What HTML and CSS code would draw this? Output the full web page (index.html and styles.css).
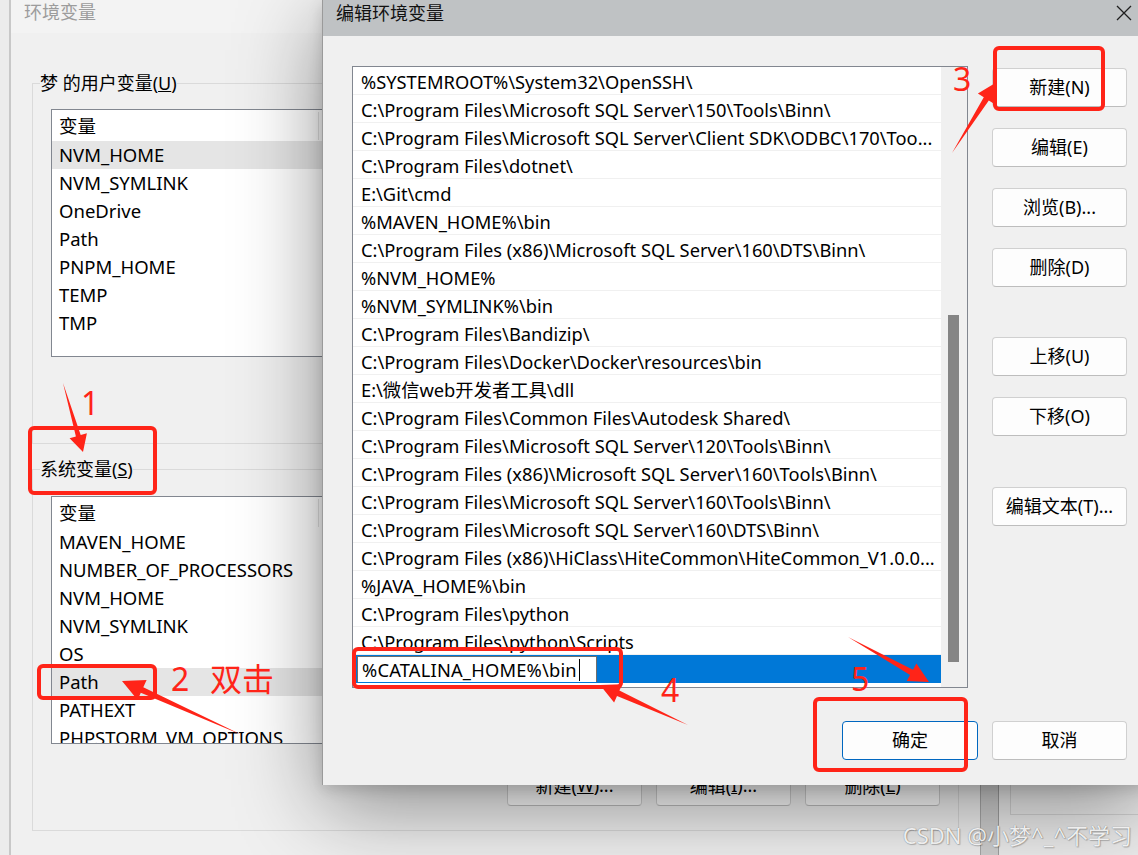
FILE: index.html
```html
<!DOCTYPE html>
<html lang="zh-CN">
<head>
<meta charset="utf-8">
<title>编辑环境变量</title>
<link rel="stylesheet" href="styles.css">
</head>
<body>
<div class="desk">
  <div class="envwin">
    <div class="env-title">环境变量</div>
    <fieldset class="grp grp-user">
      <legend>梦 的用户变量(<u>U</u>)</legend>
      <div class="vlist">
        <div class="vhead"><span>变量</span></div>
        <div class="vrow sel">NVM_HOME</div>
        <div class="vrow">NVM_SYMLINK</div>
        <div class="vrow">OneDrive</div>
        <div class="vrow">Path</div>
        <div class="vrow">PNPM_HOME</div>
        <div class="vrow">TEMP</div>
        <div class="vrow">TMP</div>
      </div>
      <div class="grp-btns">
        <div class="btn"></div>
        <div class="btn"></div>
        <div class="btn"></div>
      </div>
    </fieldset>
    <fieldset class="grp grp-sys">
      <legend>系统变量(<u>S</u>)</legend>
      <div class="vlist">
        <div class="vhead"><span>变量</span></div>
        <div class="vrow">MAVEN_HOME</div>
        <div class="vrow">NUMBER_OF_PROCESSORS</div>
        <div class="vrow">NVM_HOME</div>
        <div class="vrow">NVM_SYMLINK</div>
        <div class="vrow">OS</div>
        <div class="vrow sel">Path</div>
        <div class="vrow">PATHEXT</div>
        <div class="vrow">PHPSTORM_VM_OPTIONS</div>
      </div>
      <div class="grp-btns">
        <div class="btn">新建(<u>W</u>)...</div>
        <div class="btn">编辑(<u>I</u>)...</div>
        <div class="btn">删除(<u>L</u>)</div>
      </div>
    </fieldset>
  </div>
  <div class="side-strip"></div>
  <div class="rwin"><div class="rbox"></div></div>

  <div class="dlg">
    <div class="dlg-title">
      <div class="dlg-name">编辑环境变量</div>
      <div class="dlg-close">
        <svg width="16" height="16" viewBox="0 0 16 16"><path d="M1 1 L15 15 M15 1 L1 15" stroke="#1f1f1f" stroke-width="1.3" fill="none"/></svg>
      </div>
    </div>
    <div class="dlg-body">
      <div class="dlg-main">
        <div class="plist">
          <div class="prows">
            <div class="prow">%SYSTEMROOT%\System32\OpenSSH\</div>
            <div class="prow">C:\Program Files\Microsoft SQL Server\150\Tools\Binn\</div>
            <div class="prow">C:\Program Files\Microsoft SQL Server\Client SDK\ODBC\170\Too...</div>
            <div class="prow">C:\Program Files\dotnet\</div>
            <div class="prow">E:\Git\cmd</div>
            <div class="prow">%MAVEN_HOME%\bin</div>
            <div class="prow">C:\Program Files (x86)\Microsoft SQL Server\160\DTS\Binn\</div>
            <div class="prow">%NVM_HOME%</div>
            <div class="prow">%NVM_SYMLINK%\bin</div>
            <div class="prow">C:\Program Files\Bandizip\</div>
            <div class="prow">C:\Program Files\Docker\Docker\resources\bin</div>
            <div class="prow">E:\微信web开发者工具\dll</div>
            <div class="prow">C:\Program Files\Common Files\Autodesk Shared\</div>
            <div class="prow">C:\Program Files\Microsoft SQL Server\120\Tools\Binn\</div>
            <div class="prow">C:\Program Files (x86)\Microsoft SQL Server\160\Tools\Binn\</div>
            <div class="prow">C:\Program Files\Microsoft SQL Server\160\Tools\Binn\</div>
            <div class="prow">C:\Program Files\Microsoft SQL Server\160\DTS\Binn\</div>
            <div class="prow">C:\Program Files (x86)\HiClass\HiteCommon\HiteCommon_V1.0.0...</div>
            <div class="prow">%JAVA_HOME%\bin</div>
            <div class="prow">C:\Program Files\python</div>
            <div class="prow">C:\Program Files\python\Scripts</div>
            <div class="prow sel"><div class="edit"><span class="caret">%CATALINA_HOME%\bin</span></div></div>
          </div>
          <div class="pscroll"><div class="thumb"></div></div>
        </div>
        <div class="pbtns">
          <div class="btn">新建(N)</div>
          <div class="btn">编辑(E)</div>
          <div class="btn">浏览(B)...</div>
          <div class="btn">删除(D)</div>
          <div class="btn gap-a">上移(U)</div>
          <div class="btn">下移(O)</div>
          <div class="btn gap-b">编辑文本(T)...</div>
        </div>
      </div>
      <div class="dlg-foot">
        <div class="btn btn-ok">确定</div>
        <div class="btn">取消</div>
      </div>
    </div>
  </div>

  <svg class="anno" width="1138" height="855" viewBox="0 0 1138 855">
    <g fill="none" stroke="#ff2418" stroke-width="4" stroke-linejoin="round">
      <rect x="30" y="428" width="125" height="65" rx="4"/>
      <rect x="39" y="666" width="116" height="32" rx="4"/>
      <rect x="995" y="48" width="108" height="61" rx="4"/>
      <rect x="354" y="649" width="267" height="38" rx="4"/>
      <rect x="815" y="699" width="151" height="71" rx="4"/>
    </g>
    <g fill="#ff2418">
      <polygon points="63,383 75.9,436.4 69.6,438.2 83,452 86.9,433.2 80.7,435"/>
      <polygon points="242,735 143.3,687.3 146.6,680 122,681 137.6,700.1 140.8,692.8"/>
      <polygon points="952,153 988.8,100.5 994.8,104.3 997,82 977.9,93.6 983.8,97.3"/>
      <polygon points="688,725 619.4,690.6 622.3,684.2 600,685 614.1,702.4 617,696"/>
      <polygon points="848,637 910.1,674.9 906.7,681 929,682 916.4,663.5 913,669.7"/>
    </g>
    <g class="anno-num" fill="#ff2418">
      <text x="81" y="415">1</text>
      <text x="171" y="691">2</text>
      <text x="210" y="691">双击</text>
      <text x="953" y="91">3</text>
      <text x="661" y="702">4</text>
      <text x="851" y="691">5</text>
    </g>
  </svg>

  <div class="wm">CSDN @小梦^_^不学习</div>
</div>
</body>
</html>
```
FILE: styles.css
```css
* { box-sizing: border-box; }
html, body { margin: 0; padding: 0; }
body {
  width: 1138px;
  height: 855px;
  overflow: hidden;
  background: #ececec;
  font-family: "Noto Sans", "Noto Sans CJK SC", sans-serif;
  color: #000;
}
.desk { position: relative; width: 1138px; height: 855px; overflow: hidden; }

/* background window */
.envwin {
  position: absolute;
  left: 9px;
  top: 0;
  width: 972px;
  height: 880px;
  background: #f0f0f0;
  border-left: 2px solid #c8c8c8;
  border-right: 1px solid #a8a8a8;
}
.env-title {
  height: 33px;
  padding-left: 13px;
  background: #f3f3f3;
  font-size: 18px;
  line-height: 24px;
  color: #9c9c9c;
}
.grp {
  margin: 0 0 0 21px;
  width: 927px;
  min-width: 0;
  border: 1px solid #dadada;
  padding: 0 18px 24px 18px;
}
.grp legend {
  padding: 0;
  margin-left: -11px;
  font-size: 18px;
  line-height: 24px;
}
.grp-user { margin-top: 38px; padding-top: 14px; }
.grp-sys { margin-top: 13px; padding-top: 15px; }
.vlist {
  height: 248px;
  border: 1px solid #828790;
  background: #fff;
  overflow: hidden;
  font-size: 18.5px;
}
.vhead { height: 31px; display: flex; }
.vhead span {
  width: 267px;
  padding-left: 7px;
  border-right: 1px solid #e3e3e3;
  margin-top: 2px;
  height: 28px;
  line-height: 28px;
}
.vrow { height: 28px; line-height: 28px; padding-left: 7px; white-space: nowrap; }
.vrow.sel { background: #e5e5e5; }
.grp-btns { display: flex; justify-content: flex-end; gap: 14px; margin-top: 23px; }

.btn {
  width: 135px;
  height: 39px;
  border: 1px solid #d0d0d0;
  border-bottom-color: #bdbdbd;
  border-radius: 4px;
  background: #fdfdfd;
  font-size: 18px;
  padding-bottom: 3px;
  display: flex;
  align-items: center;
  justify-content: center;
  white-space: nowrap;
}

.side-strip {
  position: absolute;
  left: 981px;
  top: 0;
  width: 18px;
  height: 855px;
  background: #cfcfcf;
  border-right: 1px solid #a0a0a0;
}
.rwin {
  position: absolute;
  left: 999px;
  top: 0;
  width: 139px;
  height: 855px;
  background: #ececec;
  padding: 600px 0 0 11px;
}
.rbox { height: 215px; border: 1px solid #d2d2d2; border-right: 0; }

/* dialog */
.dlg {
  position: absolute;
  left: 322px;
  top: 0;
  width: 825px;
  height: 785px;
  background: #f0f0f0;
  border-left: 1px solid #9a9a9a;
  box-shadow: 0 22px 80px rgba(0, 0, 0, 0.42), 0 4px 14px rgba(0, 0, 0, 0.14);
  display: flex;
  flex-direction: column;
}
.dlg-title {
  height: 36px;
  flex: none;
  background: #bfc2c4;
  display: flex;
  justify-content: space-between;
  align-items: flex-start;
}
.dlg-name { padding: 1px 0 0 13px; font-size: 18px; line-height: 25px; color: #111; }
.dlg-close { width: 46px; height: 25px; display: flex; align-items: center; justify-content: center; }
.dlg-body { flex: 1; padding: 30px 20px 25px 29px; display: flex; flex-direction: column; }
.dlg-main { display: flex; gap: 24px; }
.plist {
  width: 616px;
  height: 622px;
  border: 1px solid #828790;
  background: #fff;
  display: flex;
  overflow: hidden;
}
.prows { width: 588px; font-size: 18.3px; }
.prow {
  height: 28px;
  line-height: 29px;
  border-bottom: 1px solid #f0f0f0;
  padding: 0 2px 0 8px;
  white-space: nowrap;
  overflow: hidden;
  text-overflow: ellipsis;
}
.prow.sel { background: #0078d7; padding-left: 4px; border-bottom-color: #0078d7; padding-top: 1px; line-height: 27px; }
.edit {
  width: 240px;
  height: 27px;
  background: #fff;
  border: 1px solid #6e6e6e;
  padding-left: 4px;
  line-height: 25px;
  display: flex;
  align-items: center;
}
.caret { border-right: 1px solid #000; line-height: 22px; padding-right: 2px; letter-spacing: 0.2px; }
.pscroll { width: 26px; background: #f0f0f0; padding: 248px 0 0 7px; }
.thumb { width: 11px; height: 347px; background: #858585; }
.pbtns { width: 135px; margin-top: 2px; display: flex; flex-direction: column; gap: 21px; }
.pbtns .gap-a { margin-top: 29px; }
.pbtns .gap-b { margin-top: 30px; }
.dlg-foot { display: flex; justify-content: flex-end; gap: 14px; margin-top: 33px; }
.btn-ok { width: 136px; border: 1px solid #0067c0; }

/* annotations */
.anno { position: absolute; left: 0; top: 0; pointer-events: none; }
.anno-num text { font-family: "Noto Sans", "Noto Sans CJK SC", sans-serif; font-size: 32px; }

.wm {
  position: absolute;
  right: 6px;
  bottom: 6px;
  font-size: 22px;
  line-height: 28px;
  color: rgba(255, 255, 255, 0.88);
  text-shadow: 0 0 1px rgba(0, 0, 0, 0.45), 1px 1px 1px rgba(0, 0, 0, 0.2);
  white-space: nowrap;
}
```
